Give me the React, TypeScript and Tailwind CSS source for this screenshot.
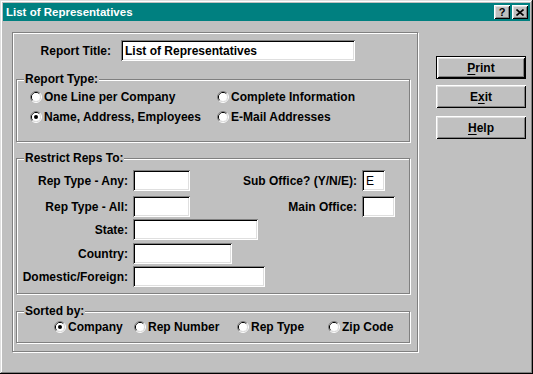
import React from "react";

const RAISED =
  "shadow-[inset_1px_1px_#fff,inset_-1px_-1px_#000,inset_2px_2px_#dfdfdf,inset_-2px_-2px_#808080]";
const SUNKEN =
  "shadow-[inset_1px_1px_#808080,inset_-1px_-1px_#fff,inset_2px_2px_#000,inset_-2px_-2px_#dfdfdf]";
const ETCHED = "border border-[#808080] shadow-[inset_1px_1px_#fff,1px_1px_#fff]";

function Radio({ checked }: { checked?: boolean }) {
  return (
    <svg width="12" height="12" viewBox="0 0 12 12" className="shrink-0">
      <path d="M2.11 9.89 A5.5 5.5 0 0 1 9.89 2.11" stroke="#808080" fill="none" />
      <path d="M9.89 2.11 A5.5 5.5 0 0 1 2.11 9.89" stroke="#ffffff" fill="none" />
      <path d="M2.82 9.18 A4.5 4.5 0 0 1 9.18 2.82" stroke="#000000" fill="none" />
      <path d="M9.18 2.82 A4.5 4.5 0 0 1 2.82 9.18" stroke="#dfdfdf" fill="none" />
      <circle cx="6" cy="6" r="4" fill="#ffffff" />
      {checked && <circle cx="6" cy="6" r="2" fill="#000000" />}
    </svg>
  );
}

function RadioItem({ label, checked, className = "" }: { label: string; checked?: boolean; className?: string }) {
  return (
    <div className={`flex items-center gap-[2px] ${className}`}>
      <Radio checked={checked} />
      <span className="leading-[14px] whitespace-nowrap">{label}</span>
    </div>
  );
}

function Group({ label, className = "", children }: { label: string; className?: string; children?: React.ReactNode }) {
  return (
    <div className={`relative ${ETCHED} ${className}`}>
      <span className="absolute left-[7px] -top-[8px] bg-[#c0c0c0] px-[1px] leading-[14px] whitespace-nowrap">
        {label}
      </span>
      {children}
    </div>
  );
}

function Field({ w, value, bold }: { w: string; value?: string; bold?: boolean }) {
  return (
    <div className={`h-[21px] ${w} bg-white ${SUNKEN} flex items-center pl-[4px] shrink-0`}>
      {value && <span className={`leading-[14px] ${bold ? "font-bold" : "font-normal"}`}>{value}</span>}
    </div>
  );
}

function Label({ w, text }: { w: string; text: string }) {
  return <div className={`${w} text-right leading-[14px] whitespace-nowrap shrink-0`}>{text}</div>;
}

function Button({ label, u, isDefault, className = "" }: { label: string; u: number; isDefault?: boolean; className?: string }) {
  const before = label.slice(0, u);
  const mid = label.slice(u, u + 1);
  const after = label.slice(u + 1);
  const inner = (
    <div className={`w-full h-full flex items-center justify-center bg-[#c0c0c0] ${RAISED}`}>
      <span className="leading-[14px]">
        {before}
        <span className="underline underline-offset-[2px]">{mid}</span>
        {after}
      </span>
    </div>
  );
  return isDefault ? (
    <div className={`w-[90px] h-[23px] border border-black ${className}`}>{inner}</div>
  ) : (
    <div className={`w-[90px] h-[23px] ${className}`}>{inner}</div>
  );
}

export default function App() {
  return (
    <div
      className={`w-[533px] h-[374px] bg-[#c0c0c0] p-[3px] flex flex-col font-['Liberation_Sans',Arial,sans-serif] text-[12px] font-bold text-black shadow-[inset_-1px_-1px_#000,inset_1px_1px_#dfdfdf,inset_-2px_-2px_#808080,inset_2px_2px_#fff]`}
    >
      {/* Title bar */}
      <div className="h-[18px] bg-[#008080] flex items-center pl-[3px] pr-[2px] shrink-0">
        <span className="text-white text-[11.5px] leading-[14px]">List of Representatives</span>
        <div className="ml-auto flex gap-[2px]">
          <div className={`w-[16px] h-[14px] bg-[#c0c0c0] ${RAISED} flex items-center justify-center`}>
            <span className="text-[11px] leading-[11px] font-bold">?</span>
          </div>
          <div className={`w-[16px] h-[14px] bg-[#c0c0c0] ${RAISED} flex items-center justify-center`}>
            <svg width="8" height="7" viewBox="0 0 8 7">
              <path d="M0.5 0.5 L7.5 6.5 M7.5 0.5 L0.5 6.5" stroke="#000" strokeWidth="1.6" />
            </svg>
          </div>
        </div>
      </div>

      {/* Body */}
      <div className="flex flex-1">
        {/* Main box */}
        <div className={`ml-[9px] mt-[11px] w-[406px] h-[320px] ${ETCHED} flex flex-col`}>
          {/* Report Title */}
          <div className="flex items-center mt-[7px]">
            <Label w="w-[98px]" text="Report Title:" />
            <div className="ml-[10px]">
              <Field w="w-[234px]" value="List of Representatives" bold />
            </div>
          </div>

          {/* Report Type */}
          <Group label="Report Type:" className="ml-[3px] mt-[18px] w-[394px] h-[63px]">
            <div className="grid grid-cols-[187px_auto] pl-[13px] pt-[7px]">
              <RadioItem label="One Line per Company" className="h-[20px]" />
              <RadioItem label="Complete Information" className="h-[20px]" />
              <RadioItem label="Name, Address, Employees" checked className="h-[20px]" />
              <RadioItem label="E-Mail Addresses" className="h-[20px]" />
            </div>
          </Group>

          {/* Restrict Reps To */}
          <Group label="Restrict Reps To:" className="ml-[3px] mt-[16px] w-[394px] h-[136px]">
            <div className="flex flex-col pt-[11px]">
              <div className="flex items-center">
                <Label w="w-[111px]" text="Rep Type - Any:" />
                <div className="ml-[5px]">
                  <Field w="w-[57px]" />
                </div>
                <Label w="w-[167px]" text="Sub Office? (Y/N/E):" />
                <div className="ml-[5px]">
                  <Field w="w-[23px]" value="E" />
                </div>
              </div>
              <div className="flex items-center mt-[5px]">
                <Label w="w-[111px]" text="Rep Type - All:" />
                <div className="ml-[5px]">
                  <Field w="w-[57px]" />
                </div>
                <Label w="w-[167px]" text="Main Office:" />
                <div className="ml-[5px]">
                  <Field w="w-[33px]" />
                </div>
              </div>
              <div className="flex items-center mt-[2px]">
                <Label w="w-[111px]" text="State:" />
                <div className="ml-[5px]">
                  <Field w="w-[125px]" />
                </div>
              </div>
              <div className="flex items-center mt-[3px]">
                <Label w="w-[111px]" text="Country:" />
                <div className="ml-[5px]">
                  <Field w="w-[99px]" />
                </div>
              </div>
              <div className="flex items-center mt-[2px]">
                <Label w="w-[111px]" text="Domestic/Foreign:" />
                <div className="ml-[5px]">
                  <Field w="w-[132px]" />
                </div>
              </div>
            </div>
          </Group>

          {/* Sorted by */}
          <Group label="Sorted by:" className="ml-[3px] mt-[17px] w-[394px] h-[32px]">
            <div className="flex items-center h-full pl-[37px]">
              <RadioItem label="Company" checked className="w-[80px]" />
              <RadioItem label="Rep Number" className="w-[103px]" />
              <RadioItem label="Rep Type" className="w-[91px]" />
              <RadioItem label="Zip Code" />
            </div>
          </Group>
        </div>

        {/* Buttons */}
        <div className="ml-[18px] mt-[35px] flex flex-col">
          <Button label="Print" u={0} isDefault />
          <Button label="Exit" u={1} className="mt-[6px]" />
          <Button label="Help" u={0} className="mt-[8px]" />
        </div>
      </div>
    </div>
  );
}
